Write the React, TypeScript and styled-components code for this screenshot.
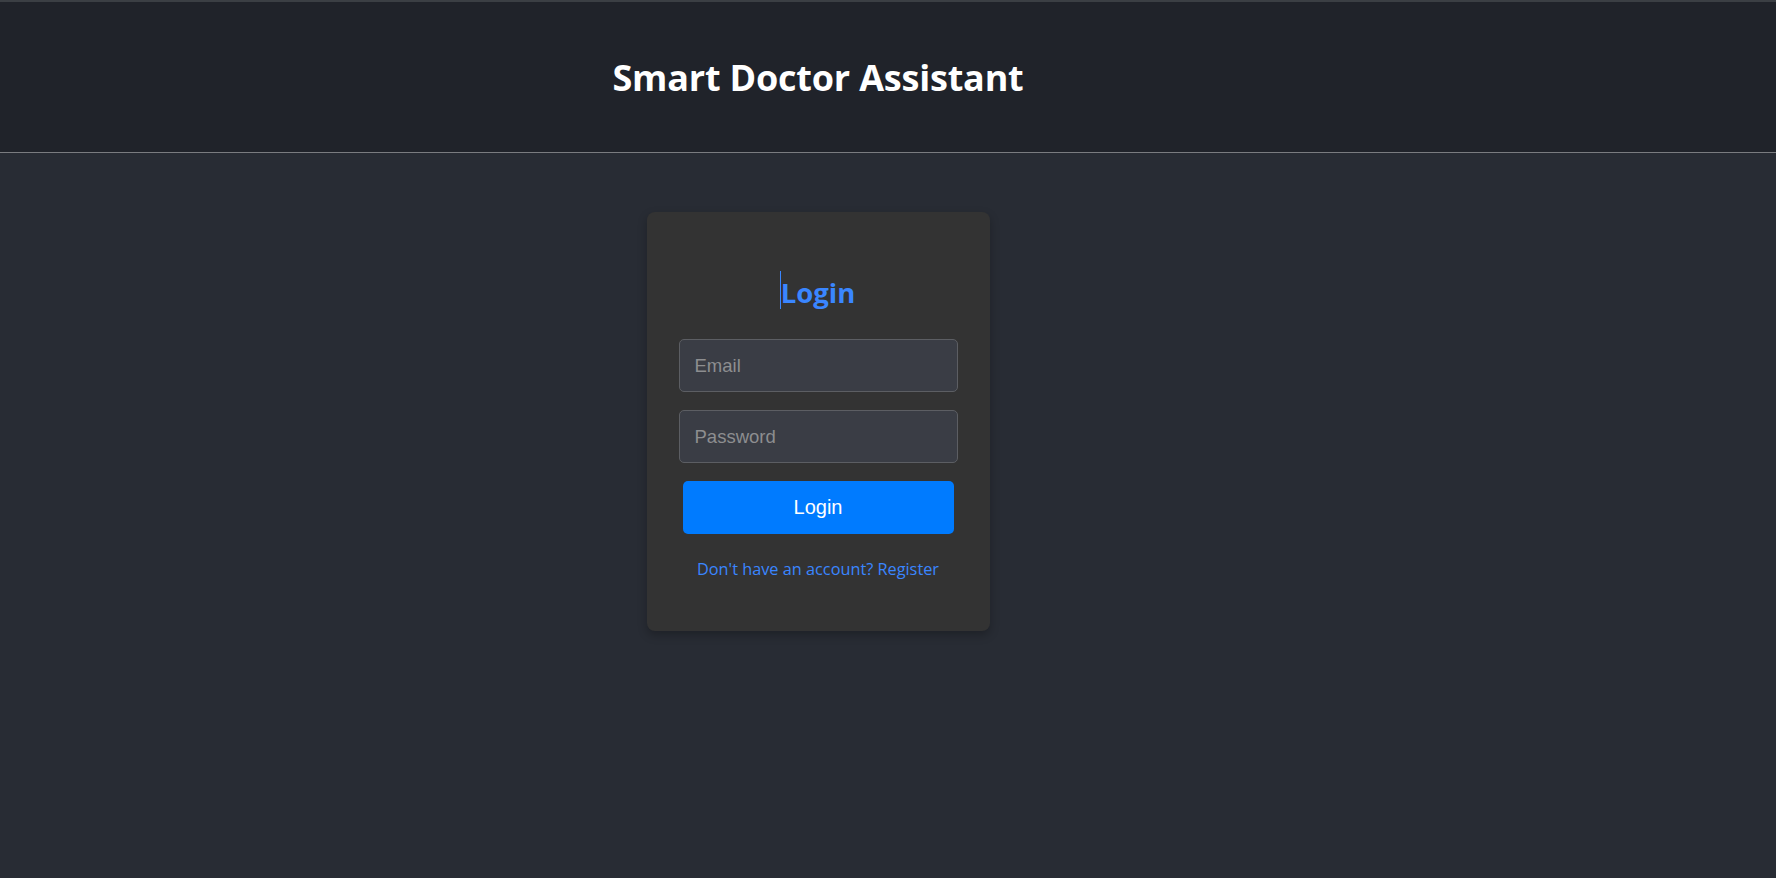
import styled, { createGlobalStyle } from "styled-components";

const GlobalStyle = createGlobalStyle`
  * {
    box-sizing: border-box;
  }
  html, body {
    margin: 0;
    padding: 0;
    background: #282c34;
    font-family: "Open Sans", "Noto Sans", sans-serif;
  }
`;

const Page = styled.div`
  min-height: 878px;
  background: #282c34;
  border-top: 2px solid #3b3f44;
`;

const Header = styled.header`
  height: 151px;
  background: #20232a;
  border-bottom: 1px solid #7a7c80;
  display: flex;
  align-items: center;
  justify-content: center;
  padding-right: 140px;
`;

const Title = styled.h1`
  margin: 0;
  color: #ffffff;
  font-size: 36px;
  font-weight: 700;
  letter-spacing: -0.2px;
`;

const Main = styled.main`
  display: flex;
  justify-content: center;
  padding: 59px 140px 0 0;
`;

const Card = styled.div`
  width: 343px;
  height: 419px;
  background: #333333;
  border-radius: 8px;
  box-shadow: 0 4px 10px rgba(0, 0, 0, 0.25);
  padding: 61px 32px 0;
  display: flex;
  flex-direction: column;
  align-items: center;
`;

const Heading = styled.h2`
  position: relative;
  margin: 0 0 26px;
  color: #3a86ff;
  font-size: 27.5px;
  font-weight: 700;
  line-height: 40px;

  /* text caret sitting before the heading */
  &::before {
    content: "";
    position: absolute;
    left: -1px;
    top: -2px;
    width: 1px;
    height: 38px;
    background: #3a86ff;
  }
`;

const Input = styled.input`
  width: 100%;
  height: 53px;
  margin-bottom: 18px;
  padding: 0 15px;
  background: #3a3d45;
  border: 1px solid #5c5e63;
  border-radius: 5px;
  color: #e6e6e6;
  font-family: "Liberation Sans", Arial, sans-serif;
  font-size: 18.5px;
  outline: none;

  &::placeholder {
    color: #8d8e90;
  }
`;

const Button = styled.button`
  width: calc(100% - 8px);
  height: 53px;
  background: #007bff;
  border: none;
  border-radius: 5px;
  color: #ffffff;
  font-family: "Liberation Sans", Arial, sans-serif;
  font-size: 20px;
  cursor: pointer;
`;

const RegisterLink = styled.a`
  margin-top: 24px;
  color: #3a86ff;
  font-size: 16.3px;
  text-decoration: none;
  cursor: pointer;
`;

export default function App() {
  return (
    <>
      <GlobalStyle />
      <Page>
        <Header>
          <Title>Smart Doctor Assistant</Title>
        </Header>
        <Main>
          <Card>
            <Heading>Login</Heading>
            <Input type="email" placeholder="Email" />
            <Input type="password" placeholder="Password" />
            <Button>Login</Button>
            <RegisterLink>Don't have an account? Register</RegisterLink>
          </Card>
        </Main>
      </Page>
    </>
  );
}
